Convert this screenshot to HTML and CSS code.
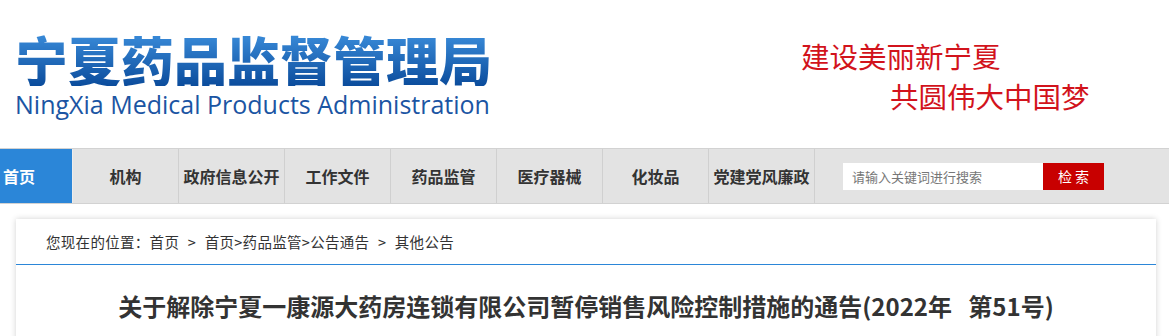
FILE: index.html
```html
<!DOCTYPE html>
<html lang="zh-CN">
<head>
    <meta charset="UTF-8">
    <meta name="viewport" content="width=device-width, initial-scale=1.0">
    <title>宁夏药品监督管理局</title>
    <link rel="stylesheet" href="styles.css">
</head>
<body>
    <div class="header">
        <div class="logo">
            <div class="logo-cn">宁夏药品监督管理局</div>
            <div class="logo-en">NingXia Medical Products Administration</div>
        </div>
        <div class="slogan">
            <div class="slogan-1">建设美丽新宁夏</div>
            <div class="slogan-2">共圆伟大中国梦</div>
        </div>
    </div>

    <div class="nav">
        <a class="nav-item home" href="#">首页</a>
        <a class="nav-item" href="#">机构</a>
        <a class="nav-item" href="#">政府信息公开</a>
        <a class="nav-item" href="#">工作文件</a>
        <a class="nav-item" href="#">药品监管</a>
        <a class="nav-item" href="#">医疗器械</a>
        <a class="nav-item" href="#">化妆品</a>
        <a class="nav-item" href="#">党建党风廉政</a>
        <div class="search">
            <input type="text" placeholder="请输入关键词进行搜索">
            <button>检 索</button>
        </div>
    </div>

    <div class="content">
        <div class="crumbs">您现在的位置：首页 &gt; 首页&gt;药品监管&gt;公告通告 &gt; 其他公告</div>
        <h1 class="title">关于解除宁夏一康源大药房连锁有限公司暂停销售风险控制措施的通告(2022年&nbsp;&nbsp;&nbsp;第51号)</h1>
    </div>
</body>
</html>
```

FILE: styles.css
```css
body {
    margin: 0;
    background-color: #fff;
    font-family: "Noto Sans CJK SC", "Microsoft YaHei", sans-serif;
    color: #333;
}

.header {
    display: flex;
    height: 148px;
}

.logo {
    padding: 32px 0 0 15px;
    width: 760px;
}

.logo-cn {
    font-size: 53px;
    font-weight: 900;
    line-height: 54px;
    background: linear-gradient(#3b8ddb, #0b4c9c);
    -webkit-background-clip: text;
    background-clip: text;
    color: transparent;
    width: max-content;
}

.logo-en {
    font-family: "Open Sans", sans-serif;
    font-size: 25px;
    line-height: 26px;
    color: #1b55a3;
    margin-top: 5px;
}

.slogan {
    padding-top: 36px;
    font-size: 28.5px;
    line-height: 40px;
    color: #d2131c;
}

.slogan-1 {
    padding-left: 26px;
}

.slogan-2 {
    padding-left: 115px;
}

.nav {
    display: flex;
    align-items: stretch;
    height: 54px;
    background-color: #e3e3e3;
    border-top: 1px solid #d2d2d2;
    border-bottom: 1px solid #d2d2d2;
}

.nav-item {
    width: 105px;
    border-left: 1px solid #d0d0d0;
    display: flex;
    align-items: center;
    justify-content: center;
    font-size: 16px;
    font-weight: bold;
    color: #333;
    text-decoration: none;
}

.nav-item.home {
    width: 72px;
    border-left: none;
    justify-content: flex-start;
    padding-left: 3px;
    box-sizing: border-box;
    background-color: #2b86d8;
    color: #fff;
}

.nav-item.home + .nav-item {
    border-left-color: #ececec;
}

.search {
    display: flex;
    align-items: center;
    padding-left: 28px;
    border-left: 1px solid #d0d0d0;
}

.search input {
    width: 200px;
    height: 27px;
    border: none;
    padding: 0 9px;
    box-sizing: border-box;
    font-family: inherit;
    font-size: 13px;
    outline: none;
}

.search input::placeholder {
    color: #777;
}

.search button {
    width: 61px;
    height: 27px;
    border: none;
    background-color: #c80000;
    color: #fff;
    font-family: inherit;
    font-size: 14px;
    cursor: pointer;
}

.content {
    margin: 15px 13px 0 16px;
    background-color: #fff;
    box-shadow: 0 0 6px rgba(0, 0, 0, 0.18);
    height: 140px;
}

.crumbs {
    height: 45px;
    line-height: 45px;
    padding-left: 30px;
    font-size: 14.5px;
    letter-spacing: 0.3px;
    word-spacing: 5px;
    color: #333;
    border-bottom: 1px solid #2b86d8;
}

.title {
    margin: 0;
    padding-top: 24px;
    text-align: center;
    font-size: 24px;
    font-weight: bold;
    color: #333;
    line-height: 34px;
}
```
